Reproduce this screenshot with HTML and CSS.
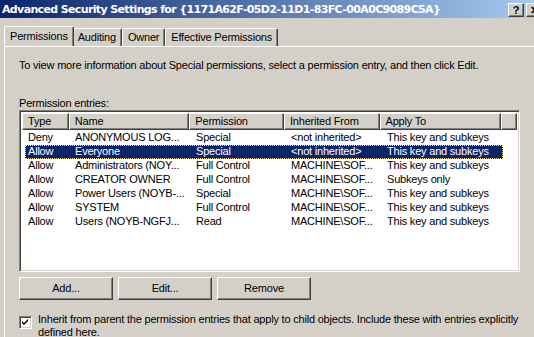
FILE: index.html
```html
<!DOCTYPE html>
<html>
<head>
<meta charset="utf-8">
<link rel="stylesheet" href="styles.css">
</head>
<body>
<div class="window">
  <div class="titlebar">
    <span class="title">Advanced Security Settings for {1171A62F-05D2-11D1-83FC-00A0C9089C5A}</span>
    <div class="tbtns">
      <span class="tbtn">?</span>
      <span class="tbtn close">✕</span>
    </div>
  </div>
  <div class="tabs">
    <div class="tab active">Permissions</div>
    <div class="tab">Auditing</div>
    <div class="tab">Owner</div>
    <div class="tab">Effective Permissions</div>
  </div>
  <div class="panel">
    <p class="info">To view more information about Special permissions, select a permission entry, and then click Edit.</p>
    <p class="label">Permission entries:</p>
    <div class="list">
      <div class="header">
        <div class="hcell c1">Type</div>
        <div class="hcell c2">Name</div>
        <div class="hcell c3">Permission</div>
        <div class="hcell c4">Inherited From</div>
        <div class="hcell c5">Apply To</div>
        <div class="hcell c6"></div>
      </div>
      <div class="rows">
        <div class="row"><span class="c1">Deny</span><span class="c2">ANONYMOUS LOG...</span><span class="c3">Special</span><span class="c4">&lt;not inherited&gt;</span><span class="c5">This key and subkeys</span></div>
        <div class="row sel"><span class="c1">Allow</span><span class="c2">Everyone</span><span class="c3">Special</span><span class="c4">&lt;not inherited&gt;</span><span class="c5">This key and subkeys</span></div>
        <div class="row"><span class="c1">Allow</span><span class="c2">Administrators (NOY...</span><span class="c3">Full Control</span><span class="c4">MACHINE\SOF...</span><span class="c5">This key and subkeys</span></div>
        <div class="row"><span class="c1">Allow</span><span class="c2">CREATOR OWNER</span><span class="c3">Full Control</span><span class="c4">MACHINE\SOF...</span><span class="c5">Subkeys only</span></div>
        <div class="row"><span class="c1">Allow</span><span class="c2">Power Users (NOYB-...</span><span class="c3">Special</span><span class="c4">MACHINE\SOF...</span><span class="c5">This key and subkeys</span></div>
        <div class="row"><span class="c1">Allow</span><span class="c2">SYSTEM</span><span class="c3">Full Control</span><span class="c4">MACHINE\SOF...</span><span class="c5">This key and subkeys</span></div>
        <div class="row"><span class="c1">Allow</span><span class="c2">Users (NOYB-NGFJ...</span><span class="c3">Read</span><span class="c4">MACHINE\SOF...</span><span class="c5">This key and subkeys</span></div>
      </div>
    </div>
    <div class="buttons">
      <div class="btn">Add...</div>
      <div class="btn">Edit...</div>
      <div class="btn">Remove</div>
    </div>
    <div class="check">
      <span class="box"><svg width="9" height="9" viewBox="0 0 9 9"><path d="M1 3 L3 5 L7 1 L7 3 L3 7 L1 5 Z" fill="#000"/></svg></span>
      <span class="ctext">Inherit from parent the permission entries that apply to child objects. Include these with entries explicitly defined here.</span>
    </div>
  </div>
</div>
</body>
</html>
```
FILE: styles.css
```css
* { box-sizing: border-box; }
html, body { margin: 0; padding: 0; }
body {
  width: 534px;
  height: 337px;
  overflow: hidden;
  background: #D4D0C8;
  font-family: "Liberation Sans", Arial, sans-serif;
  font-size: 11px;
  letter-spacing: -0.2px;
  color: #000;
}
.window { width: 534px; }
.titlebar {
  height: 18px;
  background: linear-gradient(to right, #0A246A, #A6CAF0);
  display: flex;
  align-items: center;
  justify-content: space-between;
  padding-left: 2px;
}
.title {
  color: #fff;
  font-family: "DejaVu Sans", Verdana, sans-serif;
  font-weight: bold;
  font-size: 11px;
  letter-spacing: -0.64px;
  white-space: nowrap;
}
.tbtns { display: flex; gap: 2px; margin-right: -8px; padding-top: 1px; }
.tbtn {
  width: 16px;
  height: 14px;
  background: #D4D0C8;
  border: 1px solid;
  border-color: #fff #404040 #404040 #fff;
  box-shadow: inset -1px -1px 0 #808080;
  font-weight: bold;
  font-size: 11px;
  letter-spacing: 0;
  line-height: 12px;
  text-align: center;
  color: #000;
}
.tabs {
  display: flex;
  align-items: flex-end;
  margin-top: 8px;
  padding-left: 6px;
  height: 20px;
}
.tab {
  height: 18px;
  padding: 0 5px;
  line-height: 16px;
  border-left: 1px solid #fff;
  border-top: 1px solid #fff;
  border-right: 1px solid #404040;
  box-shadow: inset -1px 0 0 #808080;
  border-radius: 2px 2px 0 0;
  white-space: nowrap;
}
.tab.active {
  height: 20px;
  margin-left: -2px;
  margin-right: -2px;
  padding: 0 5px;
  line-height: 18px;
  position: relative;
  z-index: 1;
  background: #D4D0C8;
}
.panel {
  margin-left: 4px;
  border-left: 1px solid #fff;
  border-top: 1px solid #fff;
  padding: 12px 0 0 14px;
  height: 292px;
}
.info { margin: 0; line-height: 13px; }
.label { margin: 25px 0 0 0; line-height: 13px; }
.list {
  margin-top: 0;
  width: 501px;
  height: 162px;
  background: #fff;
  border: 1px solid;
  border-color: #808080 #fff #fff #808080;
  box-shadow: inset 1px 1px 0 #404040, inset -1px -1px 0 #D4D0C8;
  padding: 2px 2px 0 2px;
}
.header { display: flex; height: 17px; }
.hcell {
  height: 17px;
  background: #D4D0C8;
  border-left: 1px solid #fff;
  border-top: 1px solid #fff;
  border-right: 1px solid #404040;
  border-bottom: 1px solid #404040;
  box-shadow: inset -1px -1px 0 #808080;
  padding-left: 5px;
  line-height: 14px;
  white-space: nowrap;
}
.c1 { width: 47px; }
.c2 { width: 121px; }
.c3 { width: 95px; }
.c4 { width: 96px; }
.c5 { width: 122px; }
.c6 { width: 16px; }
.rows { padding-top: 1px; }
.row {
  display: flex;
  height: 14px;
  line-height: 13px;
  white-space: nowrap;
}
.row span { padding-left: 6px; overflow: hidden; }
.row.sel {
  background: #0A246A;
  color: #fff;
  margin-left: 3px;
  width: 478px;
  outline: 1px dotted #F5DB95;
  outline-offset: -1px;
}
.row.sel span.c1 { width: 44px; padding-left: 3px; }
.buttons {
  display: flex;
  gap: 5px;
  margin-top: 5px;
}
.btn {
  width: 94px;
  height: 23px;
  background: #D4D0C8;
  border: 1px solid;
  border-color: #fff #404040 #404040 #fff;
  box-shadow: inset -1px -1px 0 #808080;
  text-align: center;
  line-height: 20px;
}
.check {
  display: flex;
  margin-top: 13px;
  align-items: flex-start;
}
.box {
  width: 13px;
  height: 13px;
  flex: none;
  background: #fff;
  border: 1px solid;
  border-color: #808080 #fff #fff #808080;
  box-shadow: inset 1px 1px 0 #404040, inset -1px -1px 0 #D4D0C8;
  display: flex;
  align-items: center;
  justify-content: center;
  margin-top: 3px;
}
.ctext {
  margin-left: 6px;
  line-height: 13px;
  width: 485px;
}
```
